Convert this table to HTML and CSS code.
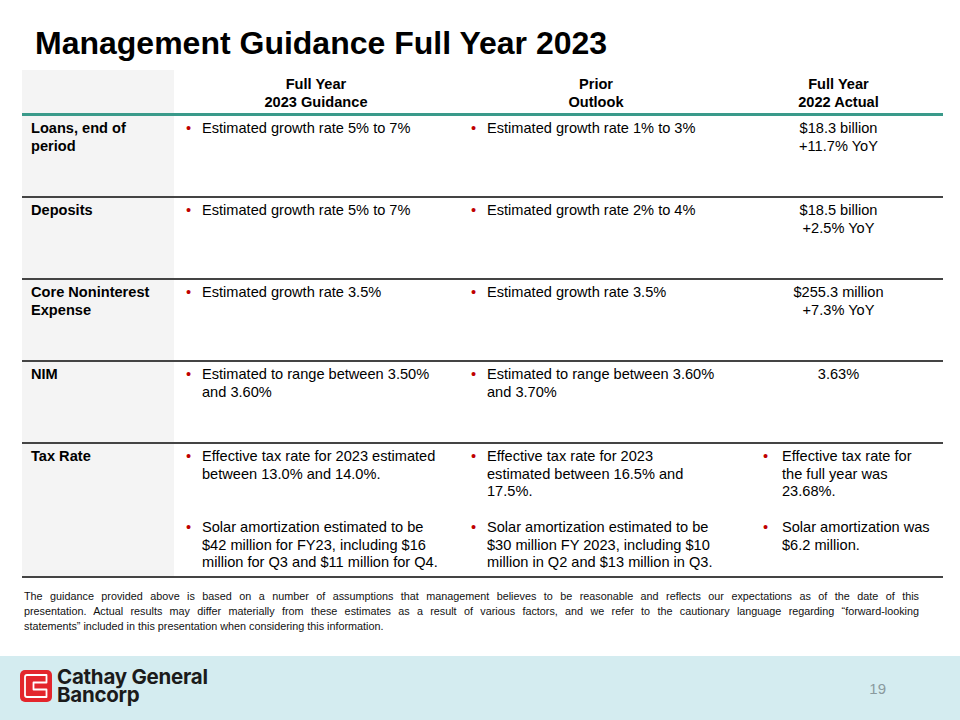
FILE: index.html
```html
<!DOCTYPE html>
<html lang="en">
<head>
<meta charset="utf-8">
<title>Management Guidance Full Year 2023</title>
<link rel="stylesheet" href="styles.css">
</head>
<body>
<div class="slide">
  <h1 class="title">Management Guidance Full Year 2023</h1>
  <div class="table">
    <div class="row head">
      <div class="cell label"></div>
      <div class="cell hd">Full Year<br>2023 Guidance</div>
      <div class="cell hd">Prior<br>Outlook</div>
      <div class="cell hd">Full Year<br>2022 Actual</div>
    </div>
    <div class="row">
      <div class="cell label">Loans, end of<br>period</div>
      <div class="cell c2"><ul class="bl"><li>Estimated growth rate 5% to 7%</li></ul></div>
      <div class="cell c3"><ul class="bl"><li>Estimated growth rate 1% to 3%</li></ul></div>
      <div class="cell c4 center">$18.3 billion<br>+11.7% YoY</div>
    </div>
    <div class="row">
      <div class="cell label">Deposits</div>
      <div class="cell c2"><ul class="bl"><li>Estimated growth rate 5% to 7%</li></ul></div>
      <div class="cell c3"><ul class="bl"><li>Estimated growth rate 2% to 4%</li></ul></div>
      <div class="cell c4 center">$18.5 billion<br>+2.5% YoY</div>
    </div>
    <div class="row">
      <div class="cell label">Core Noninterest<br>Expense</div>
      <div class="cell c2"><ul class="bl"><li>Estimated growth rate 3.5%</li></ul></div>
      <div class="cell c3"><ul class="bl"><li>Estimated growth rate 3.5%</li></ul></div>
      <div class="cell c4 center">$255.3 million<br>+7.3% YoY</div>
    </div>
    <div class="row">
      <div class="cell label">NIM</div>
      <div class="cell c2"><ul class="bl"><li><span>Estimated to range between 3.50%<br>and 3.60%</span></li></ul></div>
      <div class="cell c3"><ul class="bl"><li><span>Estimated to range between 3.60%<br>and 3.70%</span></li></ul></div>
      <div class="cell c4 center">3.63%</div>
    </div>
    <div class="row tall">
      <div class="cell label">Tax Rate</div>
      <div class="cell c2"><ul class="bl">
        <li class="first"><span>Effective tax rate for 2023 estimated<br>between 13.0% and 14.0%.</span></li>
        <li><span>Solar amortization estimated to be<br>$42 million for FY23, including $16<br>million for Q3 and $11 million for Q4.</span></li>
      </ul></div>
      <div class="cell c3"><ul class="bl">
        <li class="first"><span>Effective tax rate for 2023<br>estimated between 16.5% and<br>17.5%.</span></li>
        <li><span>Solar amortization estimated to be<br>$30 million FY 2023, including $10<br>million in Q2 and $13 million in Q3.</span></li>
      </ul></div>
      <div class="cell c4"><ul class="bl wide">
        <li class="first"><span>Effective tax rate for<br>the full year was<br>23.68%.</span></li>
        <li><span>Solar amortization was<br>$6.2 million.</span></li>
      </ul></div>
    </div>
  </div>
  <p class="note">
    <span class="jl">The guidance provided above is based on a number of assumptions that management believes to be reasonable and reflects our expectations as of the date of this</span>
    <span class="jl">presentation. Actual results may differ materially from these estimates as a result of various factors, and we refer to the cautionary language regarding “forward-looking</span>
    <span class="ll">statements” included in this presentation when considering this information.</span>
  </p>
  <footer class="band">
    <div class="brand">
      <svg class="logo" width="32" height="32" viewBox="0 0 32 32" aria-hidden="true">
        <rect width="32" height="32" rx="5" fill="#e3262c"/>
        <path d="M26.5 5 H7 Q5 5 5 7 V25 Q5 27 7 27 H26.5 V19.5 H13.5 V12.5 H26.5 Z" fill="none" stroke="#fff" stroke-width="1.8" stroke-linejoin="round"/>
      </svg>
      <div class="brand-name">
        <span class="brand-line">Cathay General</span>
        <span class="brand-line">Bancorp</span>
      </div>
    </div>
    <div class="page">19</div>
  </footer>
</div>
</body>
</html>
```
FILE: styles.css
```css
html, body {
  margin: 0;
  padding: 0;
  background: #fff;
}

.slide {
  width: 960px;
  height: 720px;
  display: flex;
  flex-direction: column;
  overflow: hidden;
  font-family: "Liberation Sans", Arial, sans-serif;
  color: #000;
  background: #fff;
}

.title {
  margin: 24px 0 8px;
  padding-left: 35px;
  font-size: 32px;
  line-height: 38px;
  font-weight: 700;
}

.table {
  margin-left: 22px;
  width: 921px;
}

.row {
  display: grid;
  grid-template-columns: 152px 284px 276px 209px;
  height: 82px;
  box-sizing: border-box;
  border-bottom: 2px solid #444;
  font-size: 14.6px;
  line-height: 17.5px;
}

.row.head {
  height: 46px;
  border-bottom: 3px solid #3a9a8a;
}

.row.tall {
  height: 134px;
}

.cell {
  padding-top: 4px;
}

.label {
  background: #f4f4f4;
  padding-left: 9px;
  font-weight: 700;
}

.hd {
  font-weight: 700;
  text-align: center;
  padding-top: 6px;
}

.center {
  text-align: center;
}

.c2 {
  padding-left: 12px;
}

.c3 {
  padding-left: 13px;
}

.bl {
  list-style: none;
  margin: 0;
  padding: 0;
}

.bl li {
  display: flex;
}

.bl li::before {
  content: "•";
  color: #c00000;
  flex: none;
  width: 16px;
}

.bl li.first {
  min-height: 71px;
}

.bl.wide {
  padding-left: 29px;
}

.bl.wide li::before {
  width: 19px;
}

.note {
  margin: 11px 0 0 24px;
  width: 895px;
  font-family: "Liberation Sans Narrow", "Arial Narrow", "Liberation Sans", sans-serif;
  font-size: 10.8px;
  line-height: 15px;
  color: #111;
}

.jl {
  display: block;
  text-align: justify;
  text-align-last: justify;
}

.ll {
  display: block;
}

.band {
  margin-top: auto;
  height: 64px;
  background: #d4ecf0;
  display: flex;
  align-items: center;
  padding: 0 74px 0 20px;
}

.brand {
  display: flex;
  align-items: center;
  gap: 5px;
  margin-top: -4px;
}

.logo {
  display: block;
}

.brand-name {
  display: flex;
  flex-direction: column;
  font-family: Inter, "Liberation Sans", sans-serif;
  font-weight: 700;
  font-size: 20.5px;
  letter-spacing: -0.25px;
  color: #1b1b1b;
}

.brand-line {
  display: block;
  line-height: 18.5px;
  height: 18.5px;
}

.page {
  margin-left: auto;
  font-family: "Liberation Sans Narrow", "Liberation Sans", sans-serif;
  font-size: 15px;
  color: #8a9a9e;
}
```
